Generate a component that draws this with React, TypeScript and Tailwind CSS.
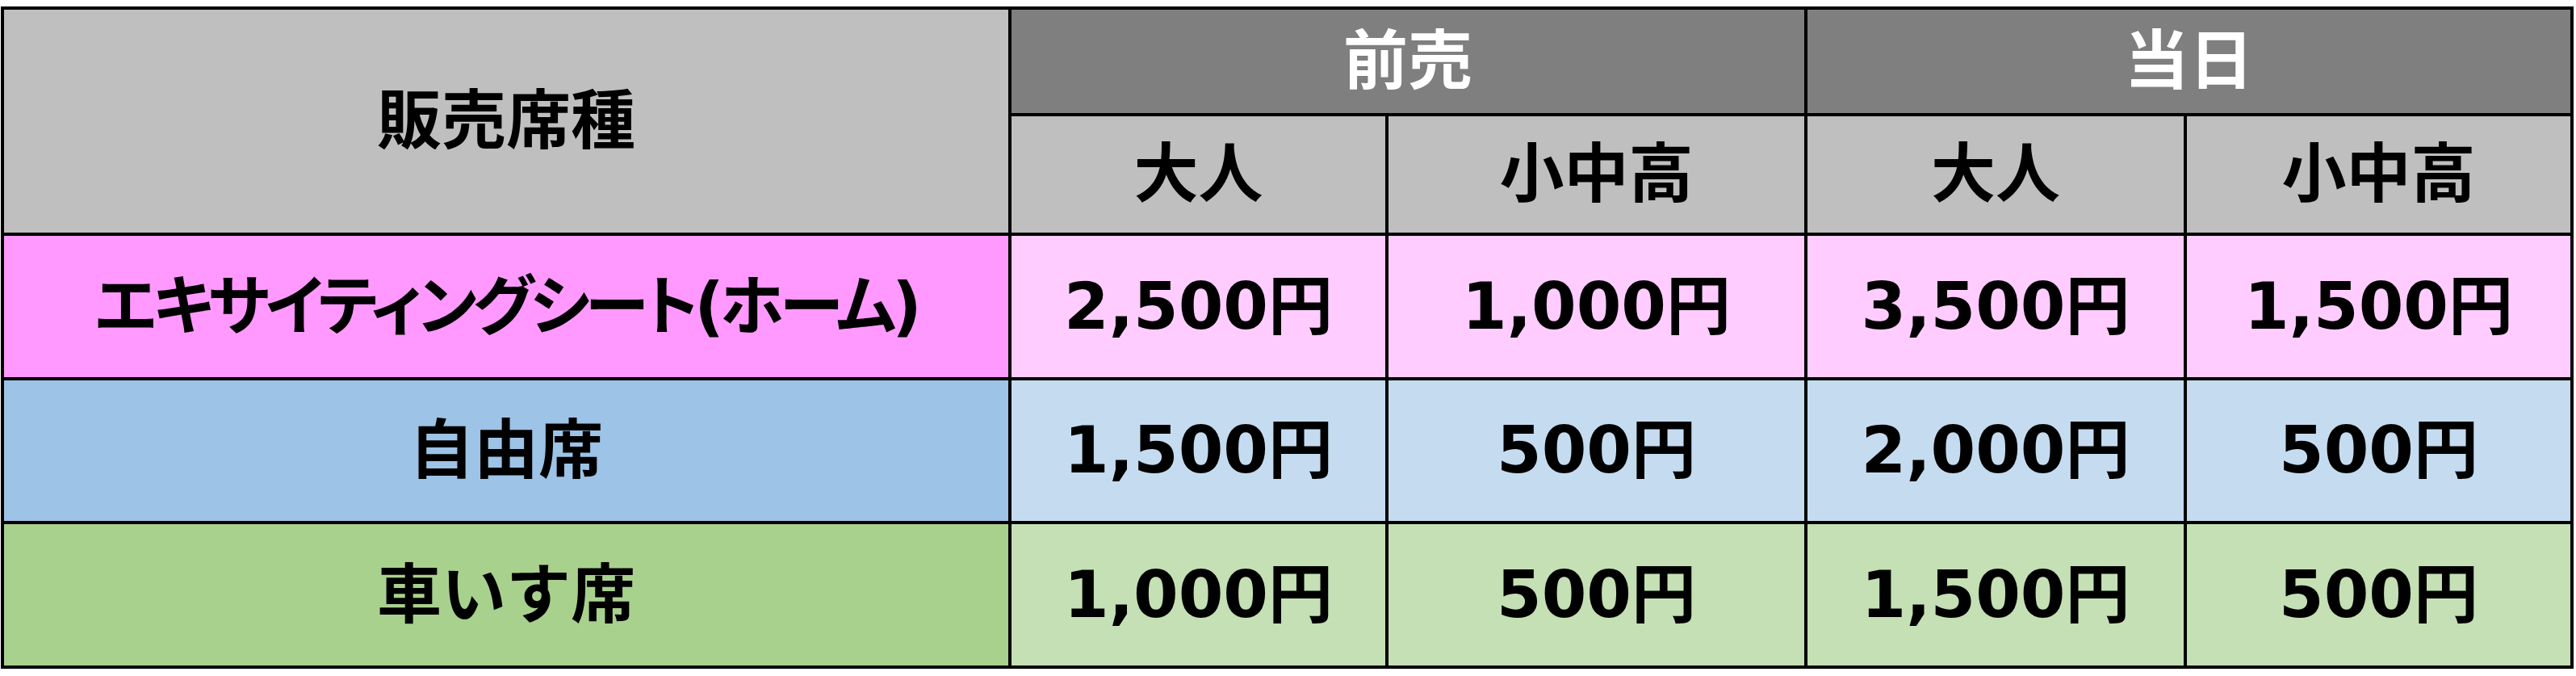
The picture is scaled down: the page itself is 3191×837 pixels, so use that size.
import { Fragment } from 'react';

const font = "font-['DejaVu_Sans','Noto_Sans_CJK_JP',sans-serif]";

type Row = {
  label: string;
  labelClass: string;
  cellBg: string;
  prices: string[];
};

const rows: Row[] = [
  {
    label: 'エキサイティングシート(ホーム)',
    labelClass: "bg-[#ff99ff] tracking-[-5px] [font-feature-settings:'palt']",
    cellBg: 'bg-[#ffccff]',
    prices: ['2,500円', '1,000円', '3,500円', '1,500円'],
  },
  {
    label: '自由席',
    labelClass: 'bg-[#9dc3e6]',
    cellBg: 'bg-[#c5dcf0]',
    prices: ['1,500円', '500円', '2,000円', '500円'],
  },
  {
    label: '車いす席',
    labelClass: 'bg-[#a9d18e]',
    cellBg: 'bg-[#c5e0b4]',
    prices: ['1,000円', '500円', '1,500円', '500円'],
  },
];

function Cell({ className, children }: { className: string; children: React.ReactNode }) {
  return (
    <div className={`flex items-center justify-center leading-none font-bold ${className}`}>
      {children}
    </div>
  );
}

export default function App() {
  return (
    <div className={`min-h-screen bg-white pt-[8px] pl-[1px] ${font}`}>
      <div className="grid w-fit grid-cols-[1244px_463px_515px_466px_475px] grid-rows-[128px_144px_175px_174px_175px] gap-[4px] bg-black p-[4px] text-[80px] text-black">
        <Cell className="row-span-2 bg-[#bfbfbf]">販売席種</Cell>
        <Cell className="col-span-2 bg-[#7f7f7f] text-white">前売</Cell>
        <Cell className="col-span-2 bg-[#7f7f7f] text-white">当日</Cell>
        <Cell className="bg-[#bfbfbf]">大人</Cell>
        <Cell className="bg-[#bfbfbf]">小中高</Cell>
        <Cell className="bg-[#bfbfbf]">大人</Cell>
        <Cell className="bg-[#bfbfbf]">小中高</Cell>
        {rows.map((row) => (
          <Fragment key={row.label}>
            <Cell className={row.labelClass}>{row.label}</Cell>
            {row.prices.map((p, i) => (
              <Cell key={i} className={row.cellBg}>
                {p}
              </Cell>
            ))}
          </Fragment>
        ))}
      </div>
    </div>
  );
}
